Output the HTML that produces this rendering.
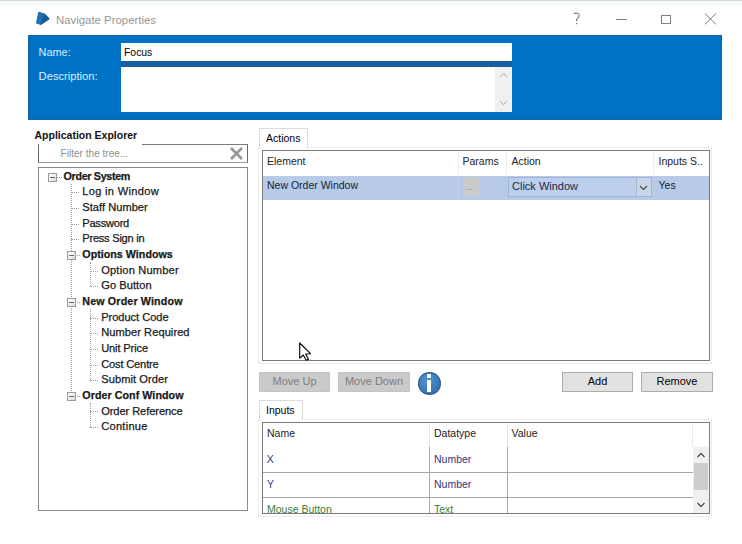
<!DOCTYPE html>
<html><head><meta charset="utf-8">
<style>
*{margin:0;padding:0;box-sizing:border-box}
html,body{width:742px;height:544px;overflow:hidden;background:#fff;font-family:"Liberation Sans",sans-serif;font-size:11px;color:#000}
.a{position:absolute;white-space:nowrap}
.t{position:absolute;white-space:nowrap;line-height:1}
#topline{left:0;top:0;width:742px;height:1px;background:#d6dada}
#topglow{left:0;top:1px;width:742px;height:5px;background:#f6fbfb}
#title{left:56px;top:14.9px;font-size:11.4px;color:#979797}
#blue{left:28px;top:34.5px;width:693.5px;height:85.5px;background:#0072c6;border:1px solid #1564a8}
.lbl{color:#dcf1ff;font-size:11px}
#nameIn{left:121px;top:43px;width:391px;height:18px;background:#fff}
#gapband{left:121px;top:61px;width:391px;height:6px;background:#1a5e9e}
#descIn{left:121px;top:67px;width:391px;height:45px;background:#fff}
#descSb{left:495px;top:67px;width:17px;height:45px;background:#f0f0f0}
.grid{position:absolute;border:1px solid #7a7a7a;background:#fff}
.tab{position:absolute;background:#fff;border:1px solid #dadada;border-bottom:none}
.page{position:absolute;border:1px solid #ebebeb}
.btn{position:absolute;background:#e1e1e1;border:1px solid #adadad;text-align:center;font-size:11px;line-height:17.2px;color:#000}
.dis{background:#cacaca;border-color:#c4c4c4;color:#7c7c7c}
.tr{color:#1a1a1a;-webkit-text-stroke:0.25px #1a1a1a}
.b{font-weight:bold}
.gt{font-size:10.5px;color:#222}
.dv{position:absolute;border-left:1px dotted #a0a0a0}
.dh{position:absolute;border-top:1px dotted #a0a0a0}
.ex{position:absolute;width:9px;height:9px;border:1px solid #9c9c9c;background:linear-gradient(135deg,#ffffff 0%,#f0f0f0 50%,#d6d6d6 100%)}
.ex:after{content:"";position:absolute;left:1px;top:3px;width:5px;height:1px;background:#6a6a6a}
</style></head><body>
<div class="a" id="topline"></div>
<div class="a" id="topglow"></div>
<svg class="a" style="left:34px;top:10px" width="18" height="17" viewBox="0 0 18 17">
<path d="M4.8 2.4 L10.5 4.1 L15 8.8 L7 14.3 L2.6 13 Z" fill="#1f72b6" stroke="#1f6cae" stroke-width="1.2" stroke-linejoin="round"/>
<path d="M10.5 4.1 L15 8.8 L7 14.3 Z" fill="#175a92" stroke="#175a92" stroke-width="0.8" stroke-linejoin="round"/>
</svg>
<div class="t" id="title">Navigate Properties</div>
<svg class="a" style="left:570px;top:10px" width="14" height="16" viewBox="0 0 14 16"><path d="M3.8 3.6 Q9.6 2.2 9.1 5.9 Q8.7 8.1 6.6 9.4 L6.6 11.2" stroke="#808080" fill="none" stroke-width="1.2"/><circle cx="6.6" cy="13.6" r="0.8" fill="#808080"/></svg>
<div class="a" style="left:616px;top:19px;width:11px;height:1px;background:#808080"></div>
<div class="a" style="left:661px;top:14.5px;width:10px;height:9.5px;border:1px solid #808080"></div>
<svg class="a" style="left:704px;top:13px" width="13" height="12" viewBox="0 0 13 12"><path d="M1 0.5 L12 11.3 M12 0.5 L1 11.3" stroke="#7a7a7a" stroke-width="1"/></svg>

<div class="a" id="blue"></div>
<div class="t lbl" style="left:38.6px;top:47.2px;font-size:10.9px">Name:</div>
<div class="t lbl" style="left:38.6px;top:71px;font-size:11.2px">Description:</div>
<div class="a" id="gapband"></div>
<div class="a" id="nameIn"></div>
<div class="t" style="left:124px;top:47.5px;font-size:10.4px">Focus</div>
<div class="a" id="descIn"></div>
<div class="a" id="descSb"></div>
<svg class="a" style="left:495px;top:67px" width="17" height="45" viewBox="0 0 17 45"><path d="M5 10 L8.5 6.5 L12 10 M5 34 L8.5 37.5 L12 34" stroke="#a8a8a8" fill="none" stroke-width="1"/></svg>

<!-- Left panel -->
<div class="t b" style="left:34.5px;top:129.5px;font-size:10.5px;color:#111">Application Explorer</div>
<div class="a" style="left:38px;top:144px;width:210px;height:19px;border:1px solid #6a6a6a;border-top-color:#7a7a7a;border-bottom:1.5px solid #9a9a9a;background:#fff"></div>
<div class="a" style="left:39px;top:143px;width:103px;height:2px;background:#fff"></div>
<div class="t" style="left:60.5px;top:148.8px;font-size:10.1px;color:#8e8e8e">Filter the tree...</div>
<svg class="a" style="left:229px;top:146px" width="15" height="15" viewBox="0 0 15 15"><path d="M2 2 L13 13 M13 2 L2 13" stroke="#959595" stroke-width="2.6"/></svg>
<div class="a" style="left:38px;top:166.5px;width:210px;height:344.5px;border:1px solid #8a8a8a;background:#fff"></div>

<!-- TREE -->
<div class="dv" style="left:70.5px;top:183.70px;height:209.10px"></div>
<div class="dv" style="left:89.5px;top:261.95px;height:24.30px"></div>
<div class="dv" style="left:89.5px;top:308.90px;height:71.25px"></div>
<div class="dv" style="left:89.5px;top:402.80px;height:24.30px"></div>
<div class="t b tr" style="left:63.6px;top:171.14px;font-size:10.7px;letter-spacing:-0.307px">Order System</div>
<div class="ex" style="left:48px;top:173.00px"></div>
<div class="dh" style="left:56px;top:176.70px;width:5.6px"></div>
<div class="t tr" style="left:82.3px;top:186.45px;font-size:11.1px;letter-spacing:0.299px">Log in Window</div>
<div class="dh" style="left:70.5px;top:192.35px;width:8.8px"></div>
<div class="t tr" style="left:82.3px;top:202.10px;font-size:11.1px;letter-spacing:0.028px">Staff Number</div>
<div class="dh" style="left:70.5px;top:208.00px;width:8.8px"></div>
<div class="t tr" style="left:82.3px;top:217.75px;font-size:11.1px;letter-spacing:-0.248px">Password</div>
<div class="dh" style="left:70.5px;top:223.65px;width:8.8px"></div>
<div class="t tr" style="left:82.3px;top:233.40px;font-size:11.1px;letter-spacing:-0.250px">Press Sign in</div>
<div class="dh" style="left:70.5px;top:239.30px;width:8.8px"></div>
<div class="t b tr" style="left:82.3px;top:249.39px;font-size:10.7px;letter-spacing:0.025px">Options Windows</div>
<div class="ex" style="left:66.5px;top:251.25px"></div>
<div class="dh" style="left:74.5px;top:254.95px;width:5.8px"></div>
<div class="t tr" style="left:101.2px;top:264.70px;font-size:11.1px;letter-spacing:0.186px">Option Number</div>
<div class="dh" style="left:89.5px;top:270.60px;width:8.7px"></div>
<div class="t tr" style="left:101.2px;top:280.35px;font-size:11.1px;letter-spacing:0.064px">Go Button</div>
<div class="dh" style="left:89.5px;top:286.25px;width:8.7px"></div>
<div class="t b tr" style="left:82.3px;top:296.34px;font-size:10.7px;letter-spacing:0.154px">New Order Window</div>
<div class="ex" style="left:66.5px;top:298.20px"></div>
<div class="dh" style="left:74.5px;top:301.90px;width:5.8px"></div>
<div class="t tr" style="left:101.2px;top:311.65px;font-size:11.1px;letter-spacing:-0.043px">Product Code</div>
<div class="dh" style="left:89.5px;top:317.55px;width:8.7px"></div>
<div class="t tr" style="left:101.2px;top:327.30px;font-size:11.1px;letter-spacing:0.056px">Number Required</div>
<div class="dh" style="left:89.5px;top:333.20px;width:8.7px"></div>
<div class="t tr" style="left:101.2px;top:342.95px;font-size:11.1px;letter-spacing:-0.135px">Unit Price</div>
<div class="dh" style="left:89.5px;top:348.85px;width:8.7px"></div>
<div class="t tr" style="left:101.2px;top:358.60px;font-size:11.1px;letter-spacing:-0.163px">Cost Centre</div>
<div class="dh" style="left:89.5px;top:364.50px;width:8.7px"></div>
<div class="t tr" style="left:101.2px;top:374.25px;font-size:11.1px;letter-spacing:0.072px">Submit Order</div>
<div class="dh" style="left:89.5px;top:380.15px;width:8.7px"></div>
<div class="t b tr" style="left:82.3px;top:390.24px;font-size:10.7px;letter-spacing:0.059px">Order Conf Window</div>
<div class="ex" style="left:66.5px;top:392.10px"></div>
<div class="dh" style="left:74.5px;top:395.80px;width:5.8px"></div>
<div class="t tr" style="left:101.2px;top:405.55px;font-size:11.1px;letter-spacing:-0.077px">Order Reference</div>
<div class="dh" style="left:89.5px;top:411.45px;width:8.7px"></div>
<div class="t tr" style="left:101.2px;top:421.20px;font-size:11.1px;letter-spacing:0.267px">Continue</div>
<div class="dh" style="left:89.5px;top:427.10px;width:8.7px"></div>
<!-- /TREE -->
<!-- Right panel: actions -->
<div class="page" style="left:258px;top:147px;width:454px;height:216.5px"></div>
<div class="tab" style="left:258.5px;top:128px;width:49.5px;height:20px"></div>
<div class="t" style="left:266px;top:132.6px;font-size:10.5px">Actions</div>
<div class="grid" style="left:262px;top:149.5px;width:448px;height:211px"></div>
<div class="a" style="left:458px;top:151px;width:1px;height:24px;background:#ececec"></div>
<div class="a" style="left:506px;top:151px;width:1px;height:24px;background:#ececec"></div>
<div class="a" style="left:653px;top:151px;width:1px;height:24px;background:#ececec"></div>
<div class="t gt" style="left:267px;top:156px">Element</div>
<div class="t gt" style="left:462.5px;top:156px">Params</div>
<div class="t gt" style="left:511.5px;top:156px">Action</div>
<div class="t gt" style="left:658.5px;top:156px">Inputs S..</div>
<div class="a" style="left:263px;top:175.5px;width:446px;height:24.7px;background:#b7cbe8"></div>
<div class="a" style="left:458px;top:175.5px;width:1px;height:24.7px;background:#c5d3ea"></div>
<div class="a" style="left:463.5px;top:176.5px;width:16.5px;height:19.5px;background:#cbcbcb"></div>
<div class="t" style="left:465.5px;top:183px;font-size:9px;color:#858585">...</div>
<div class="a" style="left:507.5px;top:177px;width:144.5px;height:20px;background:#bcd0ee;border:1px solid #9cb4dc"></div>
<div class="a" style="left:635.5px;top:178px;width:15.5px;height:18px;background:#c9d6ea;border-left:1px solid #aab8cf"></div>
<svg class="a" style="left:636px;top:178px" width="15" height="18" viewBox="0 0 15 18"><path d="M4 8 L7.5 11.5 L11 8" stroke="#444" fill="none" stroke-width="1.1"/></svg>
<div class="t gt" style="left:267px;top:180px;color:#141e36">New Order Window</div>
<div class="t" style="left:512px;top:180.5px;font-size:11px;color:#1a2a4a">Click Window</div>
<div class="t gt" style="left:658.5px;top:180px;color:#141e36">Yes</div>

<!-- buttons -->
<div class="btn dis" style="left:259px;top:372px;width:71px;height:20px">Move Up</div>
<div class="btn dis" style="left:338px;top:372px;width:72px;height:20px">Move Down</div>
<div class="a" style="left:417.5px;top:372px;width:23.5px;height:23px;border-radius:50%;background:radial-gradient(circle at 40% 35%,#5390cf 0%,#3e7bbb 55%,#2f6399 100%);border:1px solid #2c5c8e"></div>
<div class="a" style="left:426.5px;top:373.5px;width:4.5px;height:4.5px;background:#fff;border-radius:1px"></div>
<div class="a" style="left:426.5px;top:380px;width:4.5px;height:12px;background:#fff"></div>
<svg class="a" style="left:298px;top:341px" width="16" height="22" viewBox="0 0 16 22"><path d="M1.7 2 L1.7 17.3 L5.2 14 L8.2 19.2 L10.5 18.2 L7.7 13 L12.5 12.7 Z" fill="#fff" stroke="#000" stroke-width="1.1" stroke-linejoin="round"/></svg>
<div class="btn" style="left:562px;top:372px;width:71px;height:20px">Add</div>
<div class="btn" style="left:641px;top:372px;width:72px;height:20px">Remove</div>

<!-- inputs -->
<div class="page" style="left:258px;top:419px;width:454px;height:97.5px"></div>
<div class="tab" style="left:258.5px;top:400px;width:44.5px;height:20px"></div>
<div class="t" style="left:266px;top:405px;font-size:10.5px">Inputs</div>
<div class="grid" style="left:262px;top:422px;width:448px;height:92px"></div>
<div class="a" style="left:429px;top:423px;width:1px;height:24px;background:#e6e6e6"></div>
<div class="a" style="left:507px;top:423px;width:1px;height:24px;background:#e6e6e6"></div>
<div class="a" style="left:691.5px;top:423px;width:1px;height:24px;background:#ececec"></div>
<div class="a" style="left:429px;top:447px;width:1px;height:66px;background:#a8a8a8"></div>
<div class="a" style="left:507px;top:447px;width:1px;height:66px;background:#a8a8a8"></div>
<div class="a" style="left:263px;top:471.7px;width:430px;height:1px;background:#a8a8a8"></div>
<div class="a" style="left:263px;top:497px;width:430px;height:1px;background:#a8a8a8"></div>
<div class="t gt" style="left:267px;top:428px">Name</div>
<div class="t gt" style="left:434px;top:428px">Datatype</div>
<div class="t gt" style="left:511.5px;top:428px">Value</div>
<div class="t gt" style="left:266.5px;top:453.6px;color:#3a3a80;font-size:11px">X</div>
<div class="t gt" style="left:434px;top:454px;color:#33337a">Number</div>
<div class="t gt" style="left:267px;top:478.9px;color:#3a3a80">Y</div>
<div class="t gt" style="left:434px;top:478.9px;color:#33337a">Number</div>
<div class="a" style="left:263px;top:498px;width:430px;height:15px;overflow:hidden">
<div class="t gt" style="left:4px;top:6px;color:#3a803a">Mouse Button</div>
<div class="t gt" style="left:171px;top:6px;color:#3a803a">Text</div>
</div>
<div class="a" style="left:693px;top:447px;width:16px;height:66px;background:#f0f0f0"></div>
<div class="a" style="left:694px;top:463px;width:14px;height:27px;background:#cdcdcd"></div>
<svg class="a" style="left:693px;top:447px" width="16" height="65" viewBox="0 0 16 65"><path d="M4.5 10 L8 6.5 L11.5 10 M4.5 56 L8 59.5 L11.5 56" stroke="#555" fill="none" stroke-width="1.4"/></svg>

</body></html>
